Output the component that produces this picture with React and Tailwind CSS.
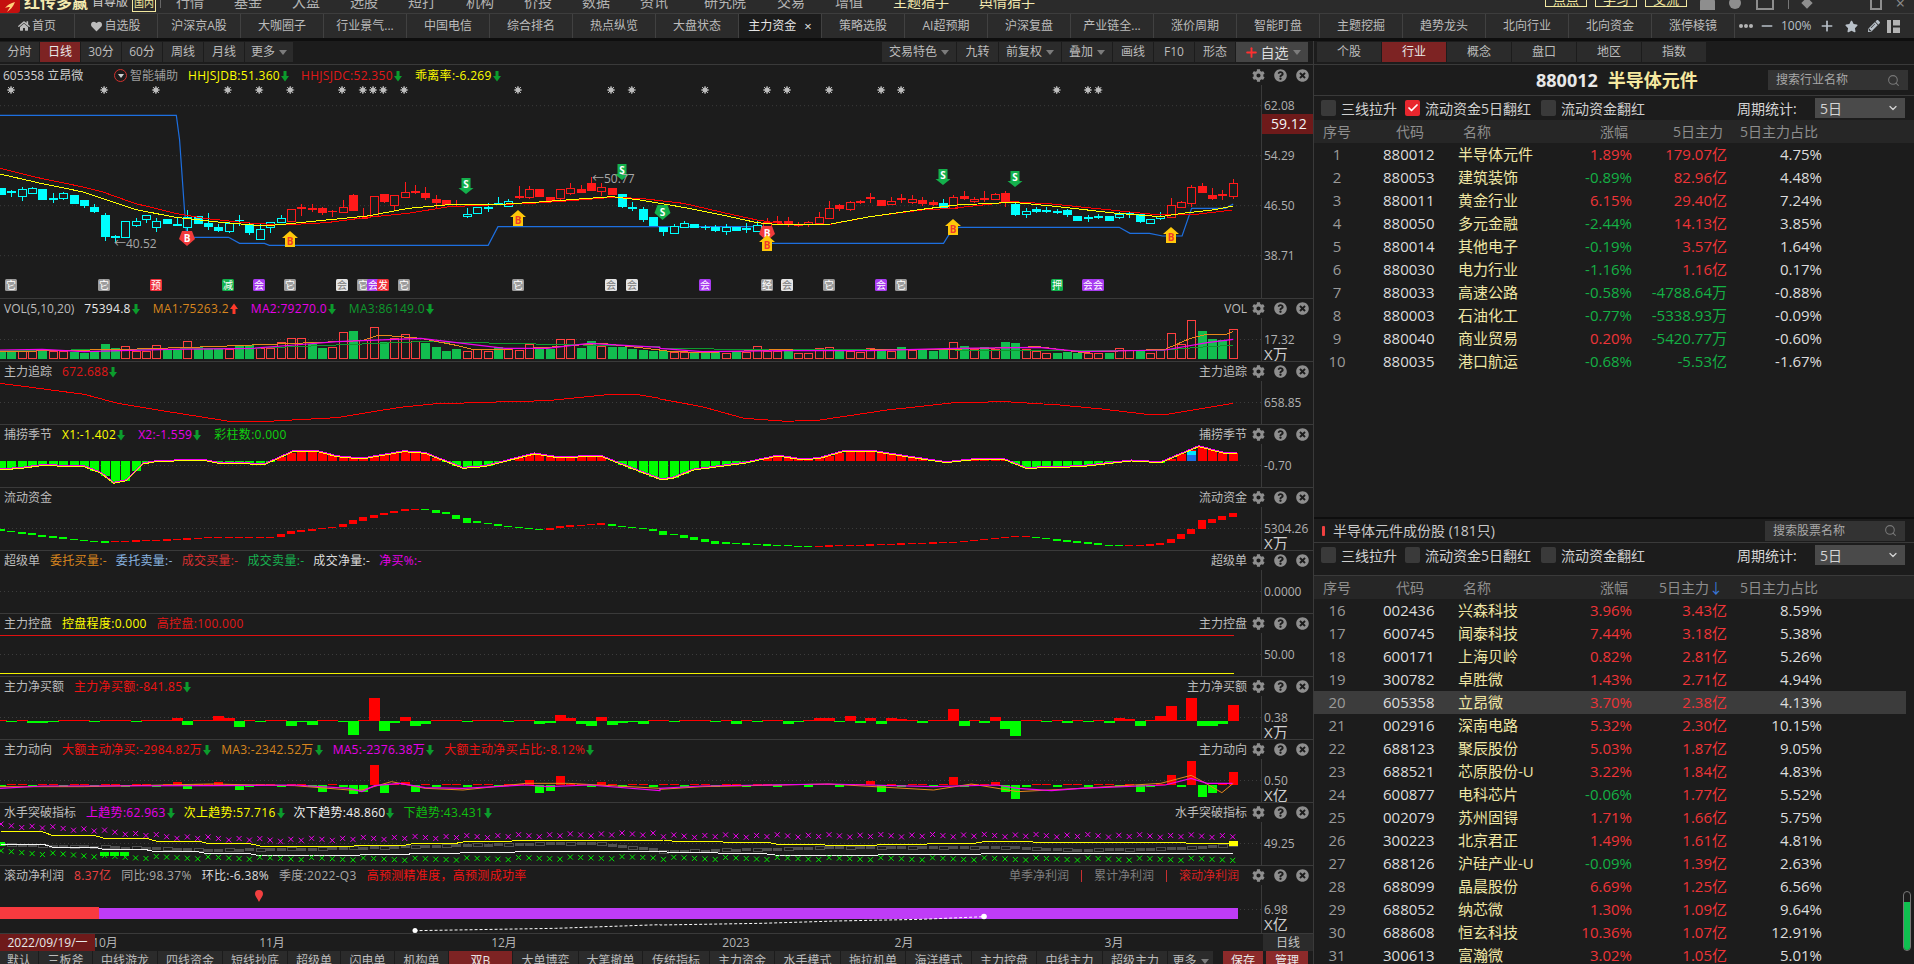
import { Check, ChevronDown, Minus, Plus, Search } from 'lucide-react';
import { FaCog, FaHeart, FaHome, FaPencilAlt, FaQuestionCircle, FaStar, FaTimesCircle } from 'react-icons/fa';

const TABS = ['自选股', '沪深京A股', '大咖圈子', '行业景气...', '中国电信', '综合排名', '热点纵览', '大盘状态', '主力资金', '策略选股', 'AI超预期', '沪深复盘', '产业链全...', '涨价周期', '智能盯盘', '主题挖掘', '趋势龙头', '北向行业', '北向资金', '涨停棱镜'];
const BOTTOM_TABS = [
  ['默认', 'w-[38px]'], ['三板斧', 'w-[53px]'], ['中线游龙', 'w-[64px]'], ['四线资金', 'w-[64px]'], ['短线抄底', 'w-[64px]'], ['超级单', 'w-[52px]'], ['闪电单', 'w-[53px]'], ['机构单', 'w-[53px]'], ['双B', 'w-[63px]'], ['大单博弈', 'w-[65px]'], ['大笔撤单', 'w-[63px]'], ['传统指标', 'w-[66px]'], ['主力资金', 'w-[64px]'], ['水手模式', 'w-[65px]'], ['拖拉机单', 'w-[64px]'], ['海洋模式', 'w-[65px]'], ['主力控盘', 'w-[64px]'], ['中线主力', 'w-[65px]'], ['超级主力', 'w-[64px]'],
];
const INDUSTRY = [
  ['1', '880012', '半导体元件', '1.89%', '179.07亿', '4.75%'],
  ['2', '880053', '建筑装饰', '-0.89%', '82.96亿', '4.48%'],
  ['3', '880011', '黄金行业', '6.15%', '29.40亿', '7.24%'],
  ['4', '880050', '多元金融', '-2.44%', '14.13亿', '3.85%'],
  ['5', '880014', '其他电子', '-0.19%', '3.57亿', '1.64%'],
  ['6', '880030', '电力行业', '-1.16%', '1.16亿', '0.17%'],
  ['7', '880033', '高速公路', '-0.58%', '-4788.64万', '-0.88%'],
  ['8', '880003', '石油化工', '-0.77%', '-5338.93万', '-0.09%'],
  ['9', '880040', '商业贸易', '0.20%', '-5420.77万', '-0.60%'],
  ['10', '880035', '港口航运', '-0.68%', '-5.53亿', '-1.67%'],
];
const STOCKS = [
  ['16', '002436', '兴森科技', '3.96%', '3.43亿', '8.59%'],
  ['17', '600745', '闻泰科技', '7.44%', '3.18亿', '5.38%'],
  ['18', '600171', '上海贝岭', '0.82%', '2.81亿', '5.26%'],
  ['19', '300782', '卓胜微', '1.43%', '2.71亿', '4.94%'],
  ['20', '605358', '立昂微', '3.70%', '2.38亿', '4.13%'],
  ['21', '002916', '深南电路', '5.32%', '2.30亿', '10.15%'],
  ['22', '688123', '聚辰股份', '5.03%', '1.87亿', '9.05%'],
  ['23', '688521', '芯原股份-U', '3.22%', '1.84亿', '4.83%'],
  ['24', '600877', '电科芯片', '-0.06%', '1.77亿', '5.52%'],
  ['25', '002079', '苏州固锝', '1.71%', '1.66亿', '5.75%'],
  ['26', '300223', '北京君正', '1.49%', '1.61亿', '4.81%'],
  ['27', '688126', '沪硅产业-U', '-0.09%', '1.39亿', '2.63%'],
  ['28', '688099', '晶晨股份', '6.69%', '1.25亿', '6.56%'],
  ['29', '688052', '纳芯微', '1.30%', '1.09亿', '9.64%'],
  ['30', '688608', '恒玄科技', '10.36%', '1.07亿', '12.91%'],
  ['31', '300613', '富瀚微', '3.02%', '1.05亿', '5.01%'],
];

// candles: type, body top, body bottom, wick top, wick bottom (y read at 3x)
// c cyan filled, h cyan hollow, r red filled, o red hollow
const CANDLES = [
  ['c',565,585,565,585],['c',573,578,570,590],['h',567,587,560,602],['h',565,580,562,583],['c',567,600,567,600],['c',595,600,580,608],['h',580,593,575,600],['c',585,612,585,612],['c',600,618,600,623],['c',622,636,613,638],
  ['c',645,710,640,722],['c',708,712,706,730],['h',664,712,664,712],['h',664,675,655,680],['h',646,658,646,668],['h',662,682,655,695],['c',657,671,657,671],['c',673,677,650,677],['h',650,682,630,695],['c',649,671,649,671],
  ['c',670,681,640,690],['c',681,693,672,697],['h',670,692,665,700],['c',659,663,646,678],['c',672,698,665,706],['h',688,716,670,718],['h',665,682,665,698],['h',655,665,646,668],['o',628,662,628,665],['r',621,625,612,647],
  ['r',625,630,613,636],['r',624,638,620,645],['r',632,636,630,650],['o',620,635,600,640],['r',586,632,582,634],['o',648,652,625,655],['o',587,648,587,650],['r',583,605,583,610],['o',586,616,585,630],['o',575,592,545,595],
  ['r',574,578,555,583],['r',580,593,562,600],['r',598,610,586,625],['r',600,614,600,614],['r',617,620,600,622],['h',642,647,625,655],['h',622,640,622,640],['h',620,625,610,635],['c',610,613,592,615],['h',602,618,598,622],
  ['r',588,594,558,596],['o',568,590,558,596],['r',568,590,568,590],['r',592,603,592,603],['o',568,594,568,603],['o',563,578,548,584],['r',566,578,556,580],['r',550,572,532,574],['o',562,574,548,588],['r',564,584,564,584],
  ['c',583,620,583,625],['c',622,628,605,632],['c',628,660,620,665],['c',652,678,652,678],['c',680,697,680,708],['h',677,700,672,702],['h',668,680,664,683],['c',673,684,673,684],['c',680,685,676,690],['c',681,693,675,695],
  ['h',680,694,672,705],['c',681,693,681,693],['c',684,688,670,700],['h',674,692,660,695],['o',665,680,655,685],['r',664,668,648,672],['r',664,674,650,680],['r',672,676,665,682],['o',665,673,662,680],['o',650,670,636,675],
  ['o',625,653,603,655],['r',616,626,612,632],['o',607,628,603,632],['r',603,608,600,612],['r',592,596,578,610],['r',600,617,600,617],['o',602,613,592,615],['r',595,599,582,610],['o',596,606,586,612],['r',600,612,590,618],
  ['r',606,614,600,618],['c',610,623,597,625],['o',590,625,585,628],['r',588,598,573,600],['o',596,604,590,610],['r',595,600,573,605],['o',583,598,578,600],['r',580,610,572,622],['c',612,645,605,647],['h',632,642,625,655],
  ['c',628,635,620,640],['c',631,635,622,640],['c',634,638,628,643],['c',631,645,628,650],['c',648,663,648,663],['c',652,656,645,665],['c',649,653,642,658],['c',648,662,648,662],['h',643,650,636,658],['c',638,642,632,655],
  ['c',643,666,643,668],['h',658,670,658,670],['h',647,655,635,660],['o',614,652,595,652],['o',606,620,604,625],['o',562,610,555,620],['r',559,578,548,580],['r',585,597,565,600],['r',582,586,570,600],['o',550,587,538,597],
];
const VOL = ('g180 g180 R185 R185 g182 R183 R183 g185 g188 g183 g162 g175 R170 R183 R183 R166 g180 g180 R155 g172 g175 g178 R178 g168 g165 R175 R175 R157 R145 R145 ' +
  'g163 g173 R172 R127 g123 R152 R112 g155 R145 R133 R155 g160 g170 g183 g178 R183 R178 R183 g170 R178 R180 R163 g172 g178 R148 R148 g175 g153 R170 g172 ' +
  'g170 g178 g180 g183 g182 R187 R187 g187 g190 g187 R190 g185 R187 R168 R185 R185 g180 R190 R190 R176 R172 g183 R185 R187 R175 g180 R184 g170 R182 g180 ' +
  'g182 g180 R157 g168 R178 g172 R178 g156 g159 R178 R184 R190 g188 g185 g188 R190 R190 g188 R176 R180 g182 R190 R180 R130 R162 R92 g123 g147 g150 R118').split(' ');
const NET_BUY = { 3: -5, 4: -5, 17: 9, 18: -11, 21: 14, 22: 9, 23: -17, 28: -14, 30: -11, 34: -42, 36: 69, 37: -29, 38: -5, 39: 12, 40: -15, 41: -8, 52: -8, 53: -6, 54: 18, 55: 9, 56: -10, 57: -14, 58: 11, 59: -11, 60: -7, 62: -8, 71: -9, 76: -9, 79: 9, 80: 9, 82: 15, 83: -5, 84: 9, 85: -9, 86: 9, 87: 6, 89: -6, 92: 36, 93: -14, 95: -5, 96: 12, 97: -24, 98: -45, 103: -5, 107: -5, 108: 9, 109: 6, 110: -14, 111: 3, 112: 15, 113: 45, 115: 69, 116: -14, 117: -14, 118: -8, 119: 48 };
const FLOW_DIR = { 17: 10, 18: -12, 21: 10, 23: -14, 31: -20, 34: -27, 35: -22, 36: 60, 37: -23, 39: 10, 40: -20, 51: 14, 52: -24, 53: -18, 54: 27, 58: 9, 84: 12, 85: -20, 92: 24, 96: 10, 97: -20, 98: -42, 110: -20, 113: 30, 115: 72, 116: -36, 117: -24, 119: 40 };

const STARS = [27, 255, 382, 558, 635, 711, 838, 889, 914, 939, 990, 1269, 1497, 1548].map((x) => x / 2.45).concat([150, 293, 339, 436, 556, 602, 961, 1033, 1057].map((x) => 640 + x / 2.306));
const TOKENS = [
  [11, 'g', '它'], [104, 'g', '它'], [156, 'r', '预'], [228, 'n', '减'], [259, 'p', '会'], [290, 'g', '它'], [342, 'w', '会'], [363, 'g', '它'], [373, 'p', '会'], [383, 'r', '发'], [404, 'g', '它'], [518, 'g', '它'], [611, 'w', '会'], [632, 'w', '会'],
  [705, 'p', '会'], [767, 'g', '经'], [787, 'w', '会'], [829, 'g', '它'], [881, 'p', '会'], [901, 'g', '它'], [1057, 'n', '押'], [1088, 'p', '会'], [1098, 'p', '会'],
];
const TOKEN_FILL = { g: '#9c9c9c', r: '#f0303a', n: '#12b04c', p: '#a83cf0', w: '#e4e4e4' };

const cx = (i) => 1.05 + 10.35 * i;
const IDX = Array.from({ length: 120 }, (_, i) => i);
const pts = (list) => list.map((p) => p.join(',')).join(' ');
const main = (a, b) => [...a.map(([x, y]) => [x / 2.45, y / 3]), ...b.map(([x, y]) => [640 + x / 2.306, y / 3])];
const sub = (a, b, off) => [...a.map(([x, y]) => [x / 2.376, off + y / 3]), ...b.map(([x, y]) => [660 + x / 2.376, off + y / 3])];
const at = (list, x) => {
  for (let k = 1; k < list.length; k++) {
    if (x <= list[k][0]) {
      const [x0, y0] = list[k - 1];
      const [x1, y1] = list[k];
      return y0 + ((y1 - y0) * (x - x0)) / Math.max(x1 - x0, 0.01);
    }
  }
  return list[list.length - 1][1];
};
const stepped = (list, hold) => IDX.map((i) => [cx(i), at(list, cx(i - (i % hold)))]);

const RED_MA = main([[0, 505], [100, 535], [200, 560], [250, 575], [330, 610], [430, 640], [500, 655], [600, 668], [690, 675], [800, 668], [900, 652], [1000, 640], [1100, 620], [1200, 615], [1300, 610], [1400, 602], [1500, 592]], [[0, 595], [100, 610], [200, 640], [270, 660], [330, 672], [430, 675], [530, 650], [650, 630], [720, 625], [860, 605], [950, 612], [1100, 632], [1200, 645], [1290, 642], [1365, 630]]);
const YEL_MA = main([[0, 522], [100, 550], [200, 575], [250, 595], [330, 628], [430, 652], [550, 668], [650, 678], [800, 660], [900, 648], [1000, 625], [1100, 614], [1200, 615], [1320, 606], [1430, 596], [1500, 590]], [[0, 600], [100, 622], [200, 648], [270, 668], [330, 675], [440, 672], [530, 650], [650, 628], [730, 615], [860, 607], [950, 618], [1100, 640], [1200, 650], [1250, 640], [1320, 630], [1368, 618]]);
const BLUE = main([[0, 346], [432, 346], [440, 420], [452, 630], [458, 712], [560, 712], [587, 730], [648, 730], [660, 736], [1196, 736], [1220, 680]], [[0, 680], [270, 680], [300, 730], [700, 730], [712, 705], [735, 682], [1105, 682], [1130, 700], [1175, 700], [1205, 708], [1250, 708], [1272, 625], [1350, 625], [1368, 612]]);

function Star({ x }) {
  return (
    <g stroke="#bdbdbd" strokeWidth="1">
      <circle cx={x} cy="90" r="2.2" fill="#bdbdbd" />
      <path d={`M${x - 4} 90H${x + 4}M${x} 86V94M${x - 3} 87L${x + 3} 93M${x + 3} 87L${x - 3} 93`} />
    </g>
  );
}

function SellArrow({ x, y }) {
  return (
    <g>
      <path d={`M${x - 4.5} ${y}H${x + 4.5}V${y + 10}H${x + 7.5}L${x} ${y + 16}L${x - 7.5} ${y + 10}H${x - 4.5}Z`} fill="#14b04c" />
      <text x={x} y={y + 10} textAnchor="middle" fontSize="10" fontWeight="700" fill="#fff">S</text>
    </g>
  );
}

function BuyArrow({ x, y }) {
  return (
    <g>
      <path d={`M${x} ${y}L${x + 8} ${y + 7}H${x + 5}V${y + 16}H${x - 5}V${y + 7}H${x - 8}Z`} fill="#ffc80a" />
      <text x={x} y={y + 14} textAnchor="middle" fontSize="10" fontWeight="700" fill="#f03a2a">B</text>
    </g>
  );
}

function Pentagon({ x, y, fill, label }) {
  return (
    <g>
      <path d={`M${x - 5} ${y}H${x + 5}L${x + 8} ${y + 8}L${x} ${y + 15}L${x - 8} ${y + 8}Z`} fill={fill} />
      <text x={x} y={y + 11} textAnchor="middle" fontSize="10" fontWeight="700" fill="#fff">{label}</text>
    </g>
  );
}

function Grid({ y }) {
  return <line x1="0" x2="1261" y1={y} y2={y} stroke="#3c3c3c" strokeDasharray="1 3" />;
}

function AxisLabel({ y, label, unit }) {
  return (
    <g fill="#b0b0b0">
      <text x="1264" y={y + 4} fontSize="12">{label}</text>
      {unit && <text x="1264" y={y + 20} fontSize="15" fill="#d0d0d0">{unit}</text>}
    </g>
  );
}

function MainChart() {
  return (
    <svg className="absolute left-0 top-0" width="1313" height="233" viewBox="0 65 1313 233">
      <line x1="1261.5" x2="1261.5" y1="85" y2="298" stroke="#3a3a3a" />
      {[105.7, 155.7, 205.7, 255.7].map((y) => <Grid key={y} y={y} />)}
      {STARS.map((x) => <Star key={x} x={x} />)}
      <polyline points={pts(BLUE)} fill="none" stroke="#1d6fe0" strokeWidth="1.2" />
      {CANDLES.map(([t, top, bot, wt, wb], i) => {
        const x = Math.round(cx(i));
        const red = t === 'r' || t === 'o';
        const color = red ? '#ff1a1a' : '#00ffff';
        const hollow = t === 'h' || t === 'o';
        return (
          <g key={i} shapeRendering="crispEdges">
            <line x1={x + 0.5} x2={x + 0.5} y1={wt / 3} y2={wb / 3} stroke={color} />
            <rect x={x - 4 + (hollow ? 0.5 : 0)} y={top / 3 + (hollow ? 0.5 : 0)} width={hollow ? 8 : 9} height={Math.max((bot - top) / 3, 1.5)} fill={hollow ? '#1c1c1c' : color} stroke={hollow ? color : 'none'} />
          </g>
        );
      })}
      <polyline points={pts(RED_MA)} fill="none" stroke="#ff0000" shapeRendering="crispEdges" />
      <polyline points={pts(YEL_MA)} fill="none" stroke="#ffff00" shapeRendering="crispEdges" />
      <SellArrow x={466} y={178} />
      <SellArrow x={622} y={164} />
      <Pentagon x={662.5} y={205} fill="#14b04c" label="S" />
      <SellArrow x={943} y={169} />
      <SellArrow x={1015} y={171} />
      <BuyArrow x={290} y={231} />
      <BuyArrow x={518} y={210} />
      <BuyArrow x={953} y={219} />
      <BuyArrow x={1171} y={227} />
      <Pentagon x={187} y={231} fill="#f23b3b" label="B" />
      <Pentagon x={767} y={226} fill="#f23b3b" label="B" />
      <BuyArrow x={767} y={235} />
      <text x="114" y="248" fontSize="12" fill="#a8a8a8">←40.52</text>
      <text x="592" y="183" fontSize="12" fill="#a8a8a8">←50.77</text>
      {TOKENS.map(([x, kind, ch], i) => (
        <g key={i}>
          <rect x={x - 6} y="279" width="12" height="12" rx="1.5" fill={TOKEN_FILL[kind]} />
          <text x={x} y="289" textAnchor="middle" fontSize="10" fill={kind === 'w' ? '#777' : '#fff'}>{ch}</text>
        </g>
      ))}
      <AxisLabel y={105.7} label="62.08" />
      <AxisLabel y={155.7} label="54.29" />
      <AxisLabel y={205.7} label="46.50" />
      <AxisLabel y={255.7} label="38.71" />
      <rect x="1262" y="114" width="51" height="20" fill="#6e1a1a" />
      <text x="1271" y="129" fontSize="14" fill="#f4f4f4">59.12</text>
    </svg>
  );
}

function VolChart() {
  const off = 290;
  return (
    <>
      {VOL.map((v, i) => {
        const top = off + Number(v.slice(1)) / 3;
        const x = Math.round(cx(i)) - 4;
        return v[0] === 'g'
          ? <rect key={i} x={x} y={top} width="9" height={off + 68.5 - top} fill="#12bd4f" shapeRendering="crispEdges" />
          : <rect key={i} x={x + 0.5} y={top} width="8" height={off + 68.5 - top} fill="#1c1c1c" stroke="#ff4040" shapeRendering="crispEdges" />;
      })}
      <polyline points={pts(sub([[0, 182], [600, 175], [1000, 155], [1200, 160], [1568, 170]], [[0, 174], [170, 178], [700, 180], [1200, 180], [1300, 170], [1362, 166]], off))} fill="none" stroke="#0f9a2e" shapeRendering="crispEdges" />
      <polyline points={pts(sub([[0, 185], [300, 178], [500, 170], [700, 160], [860, 152], [900, 135], [1000, 145], [1080, 165], [1130, 180], [1200, 178], [1300, 172], [1430, 160], [1568, 180]], [[0, 182], [100, 188], [300, 178], [340, 183], [500, 180], [720, 177], [900, 170], [1000, 187], [1200, 178], [1260, 145], [1300, 133], [1340, 135], [1362, 125]], off))} fill="none" stroke="#e8871a" shapeRendering="crispEdges" />
      <polyline points={pts(sub([[0, 180], [100, 178], [200, 185], [400, 178], [600, 175], [700, 165], [800, 155], [1000, 145], [1100, 160], [1200, 175], [1300, 175], [1400, 160], [1568, 172]], [[0, 175], [100, 185], [300, 182], [500, 182], [700, 175], [900, 172], [1000, 185], [1200, 180], [1300, 158], [1362, 148]], off))} fill="none" stroke="#f000f0" strokeWidth="1.2" />
    </>
  );
}

function TraceChart() {
  return <polyline points={pts(sub([[0, 280], [50, 288], [200, 313], [280, 340], [400, 365], [540, 393], [650, 393], [800, 383], [950, 352], [1030, 342], [1150, 337], [1300, 332], [1450, 313], [1510, 313], [1568, 325]], [[0, 327], [100, 350], [200, 385], [300, 394], [380, 390], [540, 360], [700, 338], [820, 335], [950, 345], [1050, 357], [1150, 372], [1210, 372], [1362, 340]], 290))} fill="none" stroke="#ff0000" shapeRendering="crispEdges" />;
}

function SeasonChart() {
  const line = sub([[0, 540], [50, 535], [100, 527], [200, 530], [240, 550], [270, 580], [300, 572], [340, 522], [370, 515], [480, 510], [520, 520], [630, 523], [700, 483], [750, 483], [800, 500], [860, 507], [960, 485], [1010, 490], [1100, 535], [1150, 530], [1270, 492], [1320, 502], [1430, 500], [1500, 535], [1568, 568]], [[0, 570], [30, 565], [80, 540], [200, 520], [280, 498], [340, 510], [380, 505], [440, 483], [500, 483], [600, 503], [680, 518], [760, 507], [820, 510], [870, 535], [1000, 530], [1120, 513], [1190, 518], [1280, 470], [1340, 490], [1372, 490]], 290);
  const base = 461;
  return (
    <>
      {IDX.map((i) => {
        const y = at(line, cx(i));
        return <rect key={i} x={Math.round(cx(i)) - 4} y={Math.min(y, base)} width="9" height={Math.abs(y - base)} fill={y < base ? '#ff0000' : '#00ff00'} shapeRendering="crispEdges" />;
      })}
      <rect x="1187" y="455" width="9" height="6" fill="#1d6fe0" />
      <rect x="1187" y="451" width="9" height="4" fill="#00e5ff" />
      <polyline points={pts(line.map(([x, y]) => [x, y - 1]))} fill="none" stroke="#f000f0" shapeRendering="crispEdges" />
      <polyline points={pts(line)} fill="none" stroke="#ffff00" shapeRendering="crispEdges" />
    </>
  );
}

function FlowChart() {
  const line = sub([[0, 720], [50, 728], [100, 737], [200, 752], [250, 756], [350, 752], [450, 747], [500, 743], [650, 742], [700, 725], [800, 712], [840, 695], [890, 678], [960, 660], [1000, 656], [1060, 670], [1110, 692], [1200, 708], [1290, 720], [1350, 708], [1430, 702], [1568, 722]], [[0, 728], [30, 732], [80, 745], [130, 757], [200, 762], [350, 770], [500, 765], [700, 757], [800, 745], [860, 737], [960, 752], [1070, 766], [1180, 765], [1215, 752], [1262, 725], [1290, 700], [1362, 675]], 290);
  return IDX.map((i) => {
    const y = at(line, cx(i));
    const d = y - at(line, cx(i - 1));
    const h = Math.max(Math.abs(d) * 1.2, 1.2);
    return <rect key={i} x={Math.round(cx(i)) - 4} y={y - h / 2} width="8" height={h} fill={d < 0 ? '#ff0000' : '#00ff00'} shapeRendering="crispEdges" />;
  });
}

function ControlChart() {
  return (
    <>
      <line x1="0" x2="1234" y1="635.5" y2="635.5" stroke="#e01010" />
      <line x1="0" x2="1234" y1="673.5" y2="673.5" stroke="#f2f200" />
    </>
  );
}

function NetBuyChart() {
  const base = 721;
  return IDX.map((i) => {
    const v = (NET_BUY[i] ?? (i % 4 === 1 ? -3 : 3)) / 3;
    return <rect key={i} x={Math.round(cx(i)) - 5} y={v > 0 ? base - v : base} width="10.5" height={Math.abs(v)} fill={v > 0 ? '#ff0000' : '#00ff00'} shapeRendering="crispEdges" />;
  });
}

function DirectionChart() {
  const base = 785;
  return (
    <>
      {IDX.map((i) => {
        const v = (FLOW_DIR[i] ?? (i % 3 === 0 ? -6 : 3)) / 3;
        return <rect key={i} x={Math.round(cx(i)) - 4} y={v > 0 ? base - v : base} width="9" height={Math.abs(v)} fill={v > 0 ? '#ff0000' : '#00ff00'} shapeRendering="crispEdges" />;
      })}
      <polyline points={pts(sub([[0, 500], [200, 500], [500, 492], [700, 497], [830, 510], [860, 510], [930, 485], [1010, 505], [1100, 510], [1250, 490], [1350, 490], [1568, 505]], [[0, 508], [100, 500], [400, 492], [650, 510], [740, 492], [850, 515], [1000, 505], [1190, 490], [1262, 466], [1290, 485], [1335, 518], [1362, 490]], 620))} fill="none" stroke="#e8871a" />
      <polyline points={pts(sub([[0, 505], [100, 498], [500, 497], [700, 495], [830, 505], [860, 515], [890, 497], [950, 490], [1010, 503], [1100, 505], [1250, 495], [1300, 500], [1400, 495], [1568, 512]], [[0, 505], [100, 498], [400, 492], [650, 500], [800, 495], [850, 505], [930, 512], [1000, 505], [1200, 495], [1262, 475], [1300, 490], [1360, 490]], 620))} fill="none" stroke="#f000f0" strokeWidth="1.2" />
    </>
  );
}

function SailorChart() {
  const off = 620;
  const pink = sub([[0, 615], [200, 628], [400, 650], [650, 660], [1000, 652], [1568, 640]], [[0, 648], [800, 646], [1362, 648]], off);
  const lime = sub([[0, 695], [300, 712], [1000, 718], [1568, 712]], [[0, 715], [1362, 718]], off);
  const yellow = sub([[0, 635], [100, 645], [250, 655], [400, 665], [650, 680], [900, 675], [1060, 665], [1300, 660], [1568, 660]], [[0, 663], [120, 665], [250, 672], [420, 677], [600, 672], [760, 665], [1050, 668], [1350, 670]], off);
  const white = sub([[0, 672], [170, 685], [400, 697], [680, 710], [980, 700], [1250, 695], [1568, 695]], [[0, 697], [350, 708], [580, 703], [1040, 700], [1360, 700]], off);
  const gray = sub([[0, 672], [500, 690], [800, 685], [1000, 678], [1400, 668], [1568, 690]], [[0, 695], [400, 682], [840, 682], [1000, 690], [1200, 685], [1360, 675]], off);
  const mark = (x, y, key, color) => <path key={key} d={`M${x - 2.5} ${y - 2.5}L${x + 2.5} ${y + 2.5}M${x + 2.5} ${y - 2.5}L${x - 2.5} ${y + 2.5}`} stroke={color} fill="none" />;
  return (
    <>
      {IDX.map((i) => <rect key={i} x={Math.round(cx(i)) - 4} y={at(gray, cx(i)) - 1} width="9" height="3" fill={i % 3 === 1 ? '#1c1c1c' : '#505050'} stroke={i % 3 === 1 ? '#505050' : 'none'} shapeRendering="crispEdges" />)}
      {[[100, 'h-a'], [110, 'h-b'], [120, 'h-c']].map(([x, k]) => <rect key={k} x={x} y="852" width="9" height="4" fill="#00ff00" />)}
      <rect x="0" y="842" width="5" height="4" fill="#00ff00" />
      <polyline points={pts(stepped(yellow, 5))} fill="none" stroke="#ffff00" shapeRendering="crispEdges" />
      <polyline points={pts(stepped(white, 5))} fill="none" stroke="#f4f4f4" shapeRendering="crispEdges" />
      <rect x="1229" y="841" width="9" height="5" fill="#ffff00" />
      {IDX.map((i) => mark(cx(i), at(pink, cx(i)) + ((i * 7) % 5) * 0.6 - 1, `p${i}`, '#f000f0'))}
      {IDX.map((i) => mark(cx(i), at(lime, cx(i)) + ((i * 11) % 5) * 0.5 - 1, `g${i}`, '#00f000'))}
    </>
  );
}

function ProfitChart() {
  const line = sub([[985, 932], [1320, 925], [1568, 914]], [[0, 915], [240, 910], [420, 903], [620, 898], [770, 890]], 620);
  return (
    <>
      <rect x="0" y="907" width="99" height="12" fill="#f83a3f" />
      <rect x="99" y="908" width="1139" height="11" fill="#bf3cf7" />
      <path d="M259 902c-2-4-4-6-4-8a4 4 0 0 1 8 0c0 2-2 4-4 8Z" fill="#f24040" />
      <polyline points={pts(line)} fill="none" stroke="#fff" strokeDasharray="3 2" />
      <circle cx="415" cy="930.5" r="2.5" fill="#fff" />
      <circle cx="984" cy="916.5" r="2.8" fill="#fff" />
    </>
  );
}

function DownArrow() {
  return <svg width="8" height="12" viewBox="0 0 8 12"><path d="M2.5 1H5.5V6H8L4 11.5L0 6H2.5Z" fill="#0c9c2c" /></svg>;
}

function UpArrow() {
  return <svg width="8" height="12" viewBox="0 0 8 12"><path d="M2.5 11H5.5V6H8L4 .5L0 6H2.5Z" fill="#ff3a2a" /></svg>;
}

function PanelTools() {
  return (
    <div className="flex items-center gap-[9px] text-[13px] text-[#8e8e8e]">
      <FaCog />
      <FaQuestionCircle />
      <FaTimesCircle />
    </div>
  );
}

function Reading({ text, color, arrow }) {
  return (
    <span className={`flex items-center gap-[1px] tracking-[0.3px] ${color} ${arrow ? 'mr-[3px]' : ''}`}>
      {text}
      {arrow === 'd' && <DownArrow />}
      {arrow === 'u' && <UpArrow />}
    </span>
  );
}

function Panel({ top, height, title, right, readings, axis, unit, gridY, gap = 'gap-[10px]', children }) {
  const tall = title === '滚动净利润' ? 68 : 63;
  return (
    <div className={`relative shrink-0 overflow-hidden border-t border-[#3a3a3a] ${height}`}>
      <svg className="absolute left-0 top-[-1px]" width="1313" height={tall} viewBox={`0 ${top} 1313 ${tall}`}>
        <line x1="1261.5" x2="1261.5" y1={top + 20} y2={top + 70} stroke="#3a3a3a" />
        <Grid y={gridY} />
        {children}
        <AxisLabel y={gridY} label={axis} unit={unit} />
      </svg>
      <div className="relative flex h-[19px] items-center pl-[4px] pr-[4px] text-[12px]">
        <span className="mr-[10px] text-[#bdbdbd]">{title}</span>
        <div className={`flex items-center ${gap}`}>
          {readings.map((r) => <Reading key={r.text} {...r} />)}
        </div>
        <div className="ml-auto flex items-center gap-[5px]">
          {right ?? <span className="text-[#bdbdbd]">{title}</span>}
          <PanelTools />
        </div>
      </div>
    </div>
  );
}

function Caret() {
  return <svg width="8" height="5" viewBox="0 0 8 5" className="ml-[4px]"><path d="M0 0H8L4 5Z" fill="#7c7c7c" /></svg>;
}

function ToolBtn({ label, width, active, caret }) {
  return (
    <div className={`flex h-[20px] items-center justify-center ${width} ${active ? 'bg-[#7d2323] text-[#e8e8e8]' : 'bg-[#2b2b2b] text-[#bcbcbc]'}`}>
      {label}
      {caret && <Caret />}
    </div>
  );
}

function TopMenu() {
  const items = ['行情', '基金', '大盘', '选股', '短打', '机构', '价投', '数据', '资讯'];
  return (
    <div className="flex h-[14px] shrink-0 items-start overflow-hidden border-b border-[#3d3d3d] bg-[#2b2b2b]">
      <div className="flex h-[13px] w-[20px] items-center justify-center rounded-br-[3px] bg-[#c4100f]">
        <svg width="12" height="10" viewBox="0 0 12 10"><path d="M11 0C7 1 3 3 1 6c2-1 3-1 5-1L3 10c3-2 6-5 8-10Z" fill="#ffd27a" /></svg>
      </div>
      <div className="flex h-[3px] items-center text-[14px] text-[#b4b4b4]">
        <span className="ml-[4px] w-[68px] text-[16px] font-bold text-[#f4eab0]">红传多赢</span>
        <span className="w-[40px] text-[12px] text-[#cfcfcf]">首尊版</span>
        <span className="flex h-[20px] w-[24px] items-end justify-center border border-[#f2e8a0] text-[10px] text-[#f2e8a0]">国内</span>
        <span className="ml-[4px] h-[12px] w-px bg-[#666]" />
        {items.map((t) => <span key={t} className="w-[58px] text-center">{t}</span>)}
        <span className="ml-[6px] w-[72px] text-center">研究院</span>
        <span className="ml-[1px] w-[58px] text-center">交易</span>
        <span className="w-[58px] text-center">增值</span>
        <span className="w-[86px] text-center text-[#f4eab0]">主题猎手</span>
        <span className="w-[86px] text-center text-[#f4eab0]">舆情猎手</span>
      </div>
      <div className="ml-auto flex h-[7px] items-end gap-[8px] text-[13px] text-[#f2e8a0]">
        {['点点', '学习', '交流'].map((t) => <span key={t} className="flex h-[20px] w-[42px] items-end justify-center border border-[#f2e8a0] leading-none">{t}</span>)}
      </div>
      <div className="ml-[13px] mr-[9px] flex h-[6px] w-[205px] items-center justify-between text-[#8e8e8e]">
        <span className="h-[14px] w-[15px] rounded-t-[6px] bg-[#8e8e8e]" />
        <span className="h-[12px] w-[12px] rounded-full bg-[#8e8e8e]" />
        <span className="h-[14px] w-[18px] border-2 border-[#8e8e8e]" />
        <span className="h-[12px] w-px bg-[#777]" />
        <span className="h-[8px] w-[8px] rotate-45 bg-[#8e8e8e]" />
        <span className="w-[30px]" />
        <span className="h-[14px] w-[12px] border-2 border-[#8e8e8e]" />
        <span className="text-[16px]">×</span>
      </div>
    </div>
  );
}

function TabBar() {
  return (
    <div className="flex h-[24px] shrink-0 items-stretch bg-[#2b2b2b] text-[12px] text-[#bcbcbc]">
      <div className="flex w-[75px] items-center justify-center gap-[2px] border-r border-[#414141]">
        <FaHome className="text-[12px]" />
        首页
      </div>
      {TABS.map((t) => (
        <div key={t} className={`flex w-[83px] items-center justify-center border-r border-[#414141] ${t === '主力资金' ? 'gap-[8px] bg-[#1c1c1c] text-[#e4e4e4]' : ''}`}>
          {t === '自选股' && <FaHeart className="mr-[2px] text-[11px]" />}
          {t}
          {t === '主力资金' && <span className="text-[13px] leading-none">×</span>}
        </div>
      ))}
      <div className="ml-[4px] flex flex-1 items-center text-[#b8c0c8]">
        <span className="flex w-[20px] gap-[1px]">
          <i className="h-[4px] w-[4px] rounded-full bg-[#b4b4b4]" />
          <i className="h-[4px] w-[4px] rounded-full bg-[#b4b4b4]" />
          <i className="h-[4px] w-[4px] rounded-full bg-[#b4b4b4]" />
        </span>
        <Minus size={16} strokeWidth={2.5} />
        <span className="ml-[6px] w-[38px] text-[12px]">100%</span>
        <Plus size={16} strokeWidth={2.5} />
        <FaStar className="ml-[10px] text-[13px]" />
        <FaPencilAlt className="ml-[10px] text-[12px]" />
        <svg className="ml-[7px]" width="13" height="13" viewBox="0 0 13 13"><path d="M0 0H4V13H0ZM6 0H13V5.5H6ZM6 7.5H13V13H6Z" fill="#b4b4b4" /></svg>
      </div>
    </div>
  );
}

function ChartToolbar() {
  return (
    <div className="flex h-[24px] shrink-0 items-start border-b border-[#3a3a3a] pt-[1px] text-[12px]">
      <div className="flex gap-[1px]">
        <ToolBtn label="分时" width="w-[39px]" />
        <ToolBtn label="日线" width="w-[40px]" active />
        <ToolBtn label="30分" width="w-[40px]" />
        <ToolBtn label="60分" width="w-[40px]" />
        <ToolBtn label="周线" width="w-[40px]" />
        <ToolBtn label="月线" width="w-[40px]" />
        <ToolBtn label="更多" width="w-[48px]" caret />
      </div>
      <div className="ml-auto mr-[5px] flex gap-[1px]">
        <ToolBtn label="交易特色" width="w-[74px]" caret />
        <ToolBtn label="九转" width="w-[41px]" />
        <ToolBtn label="前复权" width="w-[62px]" caret />
        <ToolBtn label="叠加" width="w-[50px]" caret />
        <ToolBtn label="画线" width="w-[40px]" />
        <ToolBtn label="F10" width="w-[40px]" />
        <ToolBtn label="形态" width="w-[40px]" />
        <div className="flex h-[20px] w-[72px] items-center justify-center bg-[#454545] text-[14px] text-[#dcdcdc]">
          <Plus size={15} strokeWidth={3} className="text-[#ff3030]" />
          <span className="ml-[2px]">自选</span>
          <Caret />
        </div>
      </div>
    </div>
  );
}

function LeftColumn() {
  return (
    <div className="flex w-[1313px] shrink-0 flex-col">
      <ChartToolbar />
      <div className="relative h-[233px] shrink-0 overflow-hidden">
        <MainChart />
        <div className="relative flex h-[21px] items-center pl-[3px] pr-[4px] text-[12px]">
          <span className="w-[111px] text-[#d0d0d0]">605358 立昂微</span>
          <span className="flex h-[13px] w-[13px] items-center justify-center rounded-full border border-[#d0302c]">
            <svg width="6" height="4" viewBox="0 0 6 4"><path d="M0 0H6L3 4Z" fill="#cfcfcf" /></svg>
          </span>
          <span className="ml-[3px] w-[58px] text-[#9c9c9c]">智能辅助</span>
          <span className="w-[113px]"><Reading text="HHJSJDB:51.360" color="text-[#ffff00]" arrow="d" /></span>
          <span className="w-[114px]"><Reading text="HHJSJDC:52.350" color="text-[#e01818]" arrow="d" /></span>
          <Reading text="乖离率:-6.269" color="text-[#ffff00]" arrow="d" />
          <div className="ml-auto"><PanelTools /></div>
        </div>
      </div>
      <Panel top={298} height="h-[63px]" title="VOL(5,10,20)" axis="17.32" unit="X万" gridY={339.5} right={<span className="text-[#bdbdbd]">VOL</span>}
        readings={[{ text: '75394.8', color: 'text-[#e8e8e8]', arrow: 'd' }, { text: 'MA1:75263.2', color: 'text-[#d8861e]', arrow: 'u' }, { text: 'MA2:79270.0', color: 'text-[#e800e8]', arrow: 'd' }, { text: 'MA3:86149.0', color: 'text-[#0e9a2e]', arrow: 'd' }]}>
        <VolChart />
      </Panel>
      <Panel top={361} height="h-[63px]" title="主力追踪" axis="658.85" gridY={402.5} readings={[{ text: '672.688', color: 'text-[#e01818]', arrow: 'd' }]}>
        <TraceChart />
      </Panel>
      <Panel top={424} height="h-[63px]" title="捕捞季节" axis="-0.70" gridY={465.5}
        readings={[{ text: 'X1:-1.402', color: 'text-[#ffff00]', arrow: 'd' }, { text: 'X2:-1.559', color: 'text-[#e800e8]', arrow: 'd' }, { text: '彩柱数:0.000', color: 'text-[#10d010]' }]}>
        <SeasonChart />
      </Panel>
      <Panel top={487} height="h-[63px]" title="流动资金" axis="5304.26" unit="X万" gridY={528.5} readings={[]}>
        <FlowChart />
      </Panel>
      <Panel top={550} height="h-[63px]" title="超级单" axis="0.0000" gridY={591.5} gap="gap-[9px]"
        readings={[{ text: '委托买量:-', color: 'text-[#d8861e]' }, { text: '委托卖量:-', color: 'text-[#8ab4e0]' }, { text: '成交买量:-', color: 'text-[#d83030]' }, { text: '成交卖量:-', color: 'text-[#18b050]' }, { text: '成交净量:-', color: 'text-[#dddddd]' }, { text: '净买%:-', color: 'text-[#e800e8]' }]} />
      <Panel top={613} height="h-[63px]" title="主力控盘" axis="50.00" gridY={654.5}
        readings={[{ text: '控盘程度:0.000', color: 'text-[#ffff00]' }, { text: '高控盘:100.000', color: 'text-[#e01818]' }]}>
        <ControlChart />
      </Panel>
      <Panel top={676} height="h-[63px]" title="主力净买额" axis="0.38" unit="X万" gridY={717.5} readings={[{ text: '主力净买额:-841.85', color: 'text-[#ee1414]', arrow: 'd' }]}>
        <NetBuyChart />
      </Panel>
      <Panel top={739} height="h-[63px]" title="主力动向" axis="0.50" unit="X亿" gridY={780.5} gap="gap-[7px]"
        readings={[{ text: '大额主动净买:-2984.82万', color: 'text-[#ee1414]', arrow: 'd' }, { text: 'MA3:-2342.52万', color: 'text-[#d8861e]', arrow: 'd' }, { text: 'MA5:-2376.38万', color: 'text-[#e800e8]', arrow: 'd' }, { text: '大额主动净买占比:-8.12%', color: 'text-[#ee1414]', arrow: 'd' }]}>
        <DirectionChart />
      </Panel>
      <Panel top={802} height="h-[63px]" title="水手突破指标" axis="49.25" gridY={843.5} gap="gap-[6px]"
        readings={[{ text: '上趋势:62.963', color: 'text-[#e800e8]', arrow: 'd' }, { text: '次上趋势:57.716', color: 'text-[#ffff00]', arrow: 'd' }, { text: '次下趋势:48.860', color: 'text-[#eeeeee]', arrow: 'd' }, { text: '下趋势:43.431', color: 'text-[#10c010]', arrow: 'd' }]}>
        <SailorChart />
      </Panel>
      <Panel top={865} height="h-[68px]" title="滚动净利润" axis="6.98" unit="X亿" gridY={909.5}
        right={(
          <div className="mr-[8px] flex items-center gap-[12px] text-[#7e7e7e]">
            <span>单季净利润</span>
            <i className="h-[12px] w-px bg-[#c83030]" />
            <span>累计净利润</span>
            <i className="h-[12px] w-px bg-[#c83030]" />
            <span className="text-[#d82020]">滚动净利润</span>
          </div>
        )}
        readings={[{ text: '8.37亿', color: 'text-[#f04040]' }, { text: '同比:98.37%', color: 'text-[#a8a8a8]' }, { text: '环比:-6.38%', color: 'text-[#dddddd]' }, { text: '季度:2022-Q3', color: 'text-[#a8a8a8]' }, { text: '高预测精准度，高预测成功率', color: 'text-[#ee1414]' }]}>
        <ProfitChart />
      </Panel>
      <div className="relative flex h-[18px] shrink-0 items-stretch justify-between border-t border-[#3a3a3a] text-[12px]">
        <svg className="absolute left-0 top-0" width="1262" height="17" viewBox="0 0 1262 17">
          <g fill="#b4b4b4" fontSize="12" textAnchor="middle">
            <text x="105" y="13">10月</text>
            <text x="272" y="13">11月</text>
            <text x="504" y="13">12月</text>
            <text x="736" y="13">2023</text>
            <text x="904" y="13">2月</text>
            <text x="1114" y="13">3月</text>
          </g>
        </svg>
        <div className="relative flex w-[95px] items-center justify-center bg-[#6e1a1a] text-[#e8e8e8]">2022/09/19/一</div>
        <div className="relative flex w-[50px] items-center justify-center bg-[#2b2b2b] text-[#c4c4c4]">日线</div>
      </div>
      <div className="flex h-[20px] shrink-0 items-center gap-[1px] text-[12px] text-[#bcbcbc]">
        {BOTTOM_TABS.map(([t, w]) => (
          <div key={t} className={`flex h-[20px] items-center justify-center ${w} ${t === '双B' ? 'bg-[#7d2323] text-[#e8e8e8]' : 'bg-[#2b2b2b]'}`}>{t}</div>
        ))}
        <div className="flex h-[20px] w-[45px] items-center justify-center bg-[#2b2b2b]">更多<Caret /></div>
        <div className="ml-auto flex h-[20px] w-[40px] items-center justify-center bg-[#8c2a2a] text-[#e8e8e8]">保存</div>
        <div className="ml-[2px] mr-[5px] flex h-[20px] w-[42px] items-center justify-center bg-[#8c2a2a] text-[#e8e8e8]">管理</div>
      </div>
    </div>
  );
}

function SearchBox({ label, width }) {
  return (
    <div className={`flex h-[20px] items-center justify-between bg-[#333333] px-[8px] text-[12px] text-[#a8a8a8] ${width}`}>
      {label}
      <Search size={13} className="text-[#777]" />
    </div>
  );
}

function CheckMark({ on }) {
  return (
    <span className={`mr-[5px] flex h-[16px] w-[15px] items-center justify-center rounded-[2px] ${on ? 'bg-[#e8262e]' : 'bg-[#3a3a3a]'}`}>
      {on && <Check size={12} strokeWidth={3.5} className="text-white" />}
    </span>
  );
}

function Filters({ checked }) {
  return (
    <div className="flex items-center pl-[7px] text-[14px] text-[#cfcfcf]">
      <span className="flex w-[84px] items-center"><CheckMark />三线拉升</span>
      <span className="flex w-[136px] items-center"><CheckMark on={checked} />流动资金5日翻红</span>
      <span className="flex w-[196px] items-center"><CheckMark />流动资金翻红</span>
      <span className="w-[78px] text-[#d4d4d4]">周期统计:</span>
      <span className="flex h-[20px] w-[90px] items-center justify-between bg-[#4a4a4a] pl-[5px] pr-[6px] text-[#d4d4d4]">
        5日
        <ChevronDown size={12} strokeWidth={2.5} />
      </span>
    </div>
  );
}

const COLS = 'grid w-[592px] grid-cols-[46px_98px_102px_72px_95px_95px] items-center';

function TableHead({ sorted }) {
  return (
    <div className={`${COLS} h-[23px] shrink-0 text-[14px] text-[#8e8e8e]`}>
      <span className="text-center">序号</span>
      <span className="pl-[36px]">代码</span>
      <span className="pl-[5px]">名称</span>
      <span className="pr-[4px] text-right">涨幅</span>
      <span className="pr-[4px] text-right">
        {sorted ? <>5日主力<span className="text-[#3a78d8]">↓</span></> : '5日主力'}
      </span>
      <span className="pr-[4px] text-right">5日主力占比</span>
    </div>
  );
}

function TableRow({ row, selected }) {
  const [no, code, name, chg, net, pct] = row;
  const sign = (v) => (v.startsWith('-') ? 'text-[#14b045]' : 'text-[#ee3438]');
  return (
    <div className={`${COLS} h-[23px] shrink-0 text-[15px] leading-none ${selected ? 'bg-[#3c3c3c]' : ''}`}>
      <span className="text-center text-[#9a9a9a]">{no}</span>
      <span className="pl-[23px] text-[#dcdcdc]">{code}</span>
      <span className="text-[#f0e6a4]">{name}</span>
      <span className={`text-right ${sign(chg)}`}>{chg}</span>
      <span className={`text-right ${sign(net)}`}>{net}</span>
      <span className="text-right text-[#dcdcdc]">{pct}</span>
    </div>
  );
}

function RightColumn() {
  const tabs = ['个股', '行业', '概念', '盘口', '地区', '指数'];
  return (
    <div className="relative flex flex-1 flex-col overflow-hidden border-l border-[#3a3a3a] text-[14px]">
      <div className="flex h-[24px] shrink-0 items-start gap-[1px] border-b border-[#3a3a3a] pl-[3px] pt-[1px] text-[12px]">
        {tabs.map((t) => (
          <div key={t} className={`flex h-[20px] w-[64px] items-center justify-center ${t === '行业' ? 'bg-[#7d2323] text-[#e8e8e8]' : 'bg-[#2b2b2b] text-[#bcbcbc]'}`}>{t}</div>
        ))}
      </div>
      <div className="flex h-[31px] shrink-0 items-center border-b border-[#3a3a3a] pl-[222px] pr-[6px]">
        <span className="text-[18px] font-bold text-[#e8e8e8]">880012</span>
        <span className="ml-[10px] text-[18px] font-bold text-[#f6e9a0]">半导体元件</span>
        <div className="ml-auto"><SearchBox label="搜索行业名称" width="w-[140px]" /></div>
      </div>
      <div className="flex h-[24px] shrink-0 items-center"><Filters checked /></div>
      <div className="bg-[#262626]"><TableHead /></div>
      {INDUSTRY.map((r) => <TableRow key={r[0]} row={r} />)}
      <div className="h-[144px] shrink-0" />
      <div className="flex h-[26px] shrink-0 items-center border-b border-[#3a3a3a] border-t-2 border-t-[#0e0e0e] pl-[8px] pr-[9px] text-[#c8c8c8]">
        <i className="mr-[8px] h-[10px] w-[3px] rounded-[1px] bg-[#f04040]" />
        半导体元件成份股 (181只)
        <div className="ml-auto"><SearchBox label="搜索股票名称" width="w-[140px]" /></div>
      </div>
      <div className="h-[33px] shrink-0 border-b border-[#3a3a3a]">
        <div className="flex h-[24px] items-center"><Filters /></div>
      </div>
      <div className="bg-[#262626]"><TableHead sorted /></div>
      {STOCKS.map((r) => <TableRow key={r[0]} row={r} selected={r[0] === '20'} />)}
      <div className="absolute right-[3px] top-[850px] h-[60px] w-[8px] overflow-hidden rounded-full border border-[#777]">
        <div className="mt-[10px] h-[50px] bg-[#10c050]" />
      </div>
    </div>
  );
}

export default function App() {
  return (
    <div className="flex h-[964px] w-[1914px] flex-col overflow-hidden bg-[#1c1c1c] font-['Open_Sans','Noto_Sans_CJK_SC',sans-serif] text-[#cccccc]">
      <TopMenu />
      <TabBar />
      <div className="h-[3px] shrink-0 bg-[#0e0e0e]" />
      <div className="flex min-h-0 flex-1">
        <LeftColumn />
        <RightColumn />
      </div>
    </div>
  );
}
